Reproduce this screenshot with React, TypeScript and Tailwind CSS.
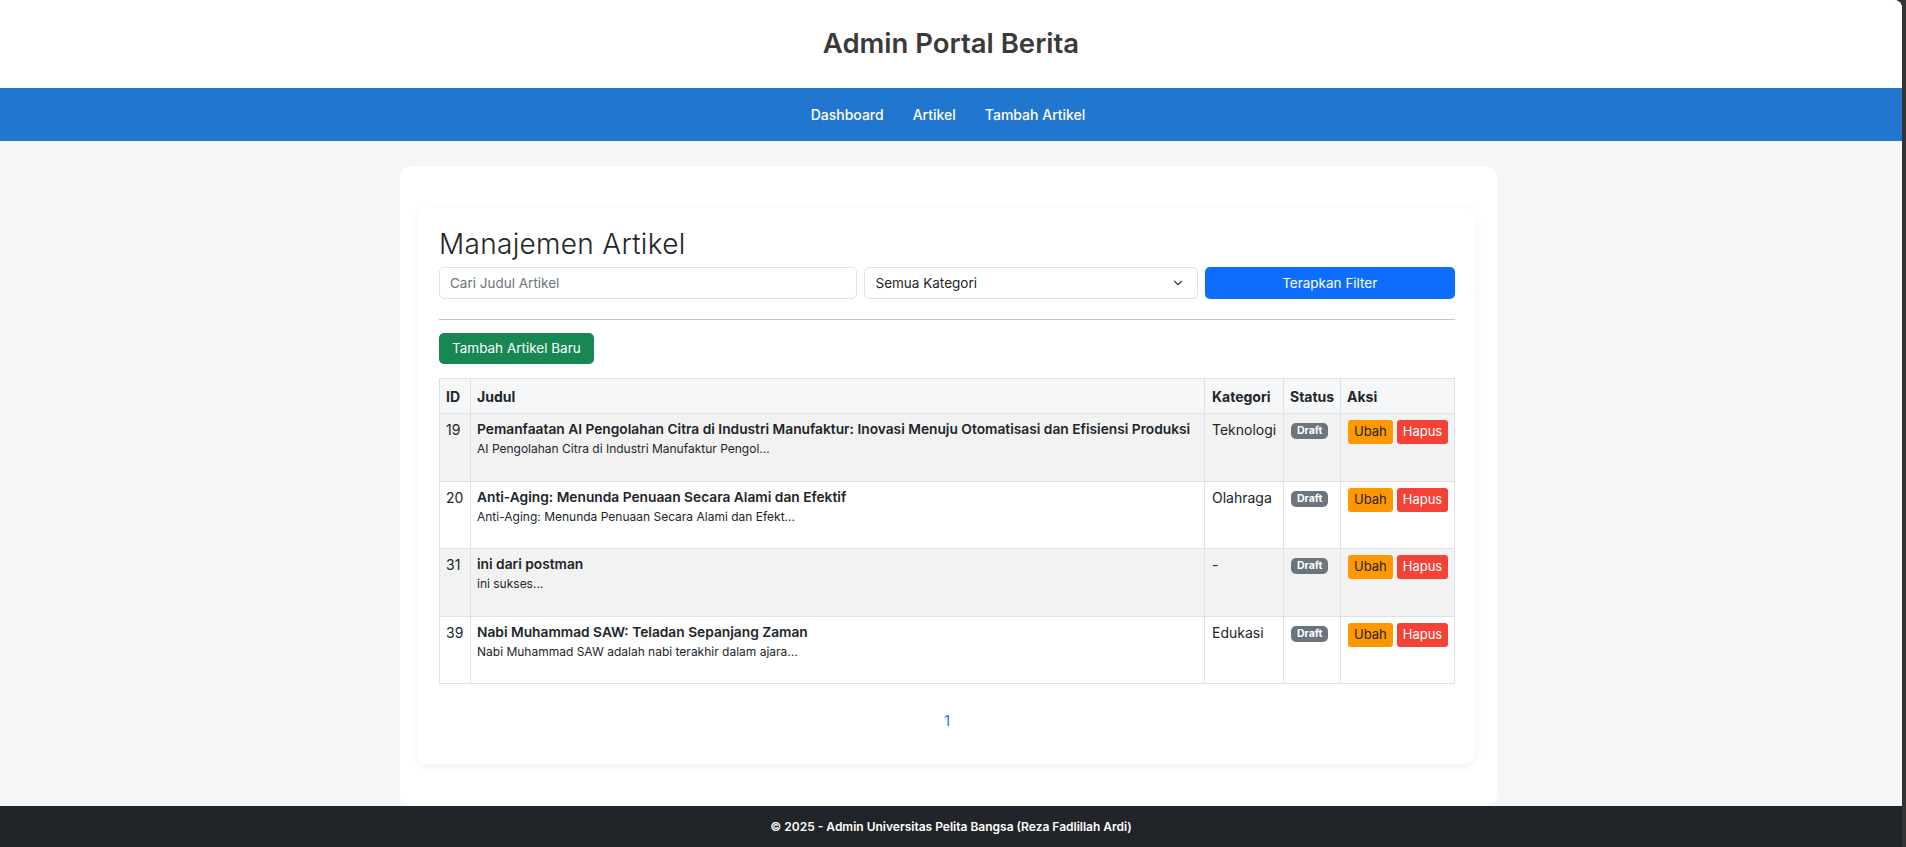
import React from 'react';
import { ChevronDown } from 'lucide-react';

interface Article {
  id: number;
  title: string;
  excerpt: string;
  category: string;
  status: string;
}

const articles: Article[] = [
  {
    id: 19,
    title: 'Pemanfaatan AI Pengolahan Citra di Industri Manufaktur: Inovasi Menuju Otomatisasi dan Efisiensi Produksi',
    excerpt: 'AI Pengolahan Citra di Industri Manufaktur Pengol...',
    category: 'Teknologi',
    status: 'Draft',
  },
  {
    id: 20,
    title: 'Anti-Aging: Menunda Penuaan Secara Alami dan Efektif',
    excerpt: 'Anti-Aging: Menunda Penuaan Secara Alami dan Efekt...',
    category: 'Olahraga',
    status: 'Draft',
  },
  {
    id: 31,
    title: 'ini dari postman',
    excerpt: 'ini sukses...',
    category: '-',
    status: 'Draft',
  },
  {
    id: 39,
    title: 'Nabi Muhammad SAW: Teladan Sepanjang Zaman',
    excerpt: 'Nabi Muhammad SAW adalah nabi terakhir dalam ajara...',
    category: 'Edukasi',
    status: 'Draft',
  },
];

const navLinks = ['Dashboard', 'Artikel', 'Tambah Artikel'];

export default function App() {
  return (
    <div className="flex min-h-[847px] bg-[#333] pr-[4px] font-['Inter',sans-serif]">
      <div className="flex-1 flex flex-col bg-[#f5f6f8] rounded-tr-[8px] overflow-hidden">
        {/* Header */}
        <header className="h-[88px] bg-white flex items-center justify-center">
          <h1 className="text-[27.5px] font-semibold text-[#3a3a3a] leading-none">Admin Portal Berita</h1>
        </header>

        {/* Navigation */}
        <nav className="h-[53px] bg-[#2176cf] flex items-center justify-center gap-[29px] pr-[6px]">
          {navLinks.map((link) => (
            <a key={link} href="#" className="text-white text-[14px] font-medium">
              {link}
            </a>
          ))}
        </nav>

        {/* Main */}
        <main className="flex-1 flex justify-center pt-[25px] pr-[5px]">
          <div className="w-[1097px] bg-white rounded-[12px] pt-[41px] pb-[42px] pl-[17px] pr-[22px]">
            <div className="bg-white rounded-[10px] shadow-[0_2px_10px_rgba(0,0,0,0.06)] pt-[22px] pl-[22px] pr-[20px] pb-[33px]">
              <h2 className="text-[28px] font-light text-[#212529] leading-[31px] tracking-[0.3px]">Manajemen Artikel</h2>

              {/* Filter */}
              <div className="grid grid-cols-[5fr_4fr_3fr] gap-[7px] mt-[7px]">
                <input
                  type="text"
                  placeholder="Cari Judul Artikel"
                  className="h-[32px] border border-[#dee2e6] rounded-[5px] px-[10px] text-[13.5px] text-[#212529] placeholder:text-[#6c757d] outline-none"
                />
                <div className="h-[32px] border border-[#dee2e6] rounded-[5px] pl-[11px] pr-[12px] flex items-center justify-between text-[13.5px] text-[#212529]">
                  <span>Semua Kategori</span>
                  <ChevronDown className="w-[14px] h-[14px] text-[#343a40]" strokeWidth={2} />
                </div>
                <button className="h-[32px] bg-[#0d6efd] rounded-[5px] text-white text-[13.5px]">
                  Terapkan Filter
                </button>
              </div>

              <div className="mt-[20px] h-px bg-[#c6c6c6]" />

              <button className="mt-[13px] h-[31px] px-[13px] bg-[#198754] text-white text-[13.5px] rounded-[5px]">
                Tambah Artikel Baru
              </button>

              {/* Table */}
              <table className="mt-[14px] w-full table-fixed border-collapse border border-[#dee2e6] text-[#212529]">
                <colgroup>
                  <col className="w-[31px]" />
                  <col />
                  <col className="w-[79px]" />
                  <col className="w-[57px]" />
                  <col className="w-[114px]" />
                </colgroup>
                <thead>
                  <tr className="h-[35px] bg-[#f6f7f9] text-left text-[14px] font-bold">
                    <th className="border border-[#dee2e6] px-[6px] font-bold">ID</th>
                    <th className="border border-[#dee2e6] px-[6px] font-bold">Judul</th>
                    <th className="border border-[#dee2e6] px-[7px] font-bold">Kategori</th>
                    <th className="border border-[#dee2e6] px-[6px] font-bold">Status</th>
                    <th className="border border-[#dee2e6] px-[6px] font-bold">Aksi</th>
                  </tr>
                </thead>
                <tbody>
                  {articles.map((article, index) => (
                    <tr
                      key={article.id}
                      className={`h-[67.5px] align-top ${index % 2 === 0 ? 'bg-[#f2f2f2]' : 'bg-white'}`}
                    >
                      <td className="border border-[#dee2e6] px-[6px] pt-[5px] text-[14px] leading-[21px]">
                        {article.id}
                      </td>
                      <td className="border border-[#dee2e6] px-[6px] pt-[5px]">
                        <div className="text-[13.75px] font-semibold leading-[21px] whitespace-nowrap">{article.title}</div>
                        <div className="text-[12px] leading-[18px]">{article.excerpt}</div>
                      </td>
                      <td className="border border-[#dee2e6] px-[7px] pt-[5px] text-[14px] leading-[21px]">
                        {article.category}
                      </td>
                      <td className="border border-[#dee2e6] px-[7px] pt-[9px]">
                        <div className="flex">
                          <span className="h-[16px] px-[6px] rounded-[5px] bg-[#6c757d] text-white text-[10.5px] font-bold leading-[16px]">
                            {article.status}
                          </span>
                        </div>
                      </td>
                      <td className="border border-[#dee2e6] px-[7px] pt-[6px]">
                        <div className="flex gap-[4px]">
                          <button className="h-[24px] px-[6px] rounded-[3px] bg-[#ff9800] text-[#212529] text-[13px]">
                            Ubah
                          </button>
                          <button className="h-[24px] px-[6px] rounded-[3px] bg-[#f44336] text-white text-[13px]">
                            Hapus
                          </button>
                        </div>
                      </td>
                    </tr>
                  ))}
                </tbody>
              </table>

              {/* Pagination */}
              <div className="mt-[26px] flex justify-center">
                <a href="#" className="text-[14px] leading-[21px] text-[#0d6efd]">1</a>
              </div>
            </div>
          </div>
        </main>

        {/* Footer */}
        <footer className="h-[41px] bg-[#212529] flex items-center justify-center">
          <p className="text-white text-[12px] font-semibold">
            © 2025 - Admin Universitas Pelita Bangsa (Reza Fadlillah Ardi)
          </p>
        </footer>
      </div>
    </div>
  );
}
